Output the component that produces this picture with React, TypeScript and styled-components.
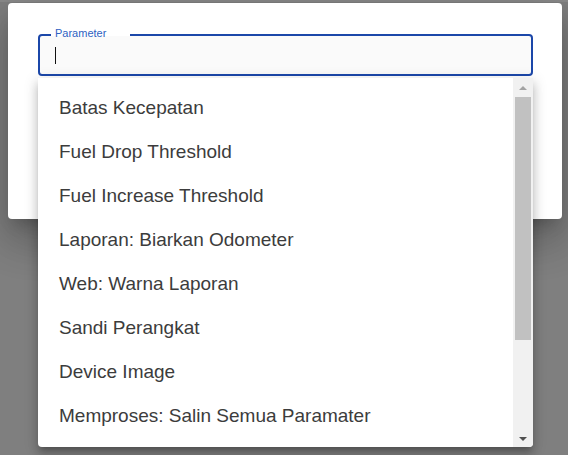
import styled, { createGlobalStyle } from "styled-components";

/*
 * Parameter picker: a dialog with an outlined, focused text field and its
 * open autocomplete list hanging below it over the dialog.
 */

const options = [
  "Batas Kecepatan",
  "Fuel Drop Threshold",
  "Fuel Increase Threshold",
  "Laporan: Biarkan Odometer",
  "Web: Warna Laporan",
  "Sandi Perangkat",
  "Device Image",
  "Memproses: Salin Semua Paramater",
];

const GlobalStyle = createGlobalStyle`
  html, body {
    margin: 0;
    padding: 0;
    background: #7f7f7f;
    font-family: "Liberation Sans", Arial, sans-serif;
  }
`;

export default function App() {
  return (
    <>
      <GlobalStyle />
      <Backdrop>
        <Dialog>
          <FieldWrap>
            <Field>
              <Notch />
              <Label>Parameter</Label>
              <Caret />
            </Field>
            <Menu>
              <OptionList>
                {options.map((o) => (
                  <Option key={o}>{o}</Option>
                ))}
              </OptionList>
              <Scrollbar>
                <ScrollButton>
                  <Arrow $dir="up" />
                </ScrollButton>
                <Track>
                  <Thumb />
                </Track>
                <ScrollButton>
                  <Arrow $dir="down" />
                </ScrollButton>
              </Scrollbar>
            </Menu>
          </FieldWrap>
        </Dialog>
      </Backdrop>
    </>
  );
}

const Backdrop = styled.div`
  height: 455px;
  box-sizing: border-box;
  padding: 3px 0 0 8px;
  overflow: hidden;
  background: linear-gradient(#8a8a8a 0, #8a8a8a 2px, #7f7f7f 2px);
`;

const Dialog = styled.div`
  width: 554px;
  height: 216px;
  box-sizing: border-box;
  padding: 31px 29px 0 30px;
  background: #fff;
  border-radius: 4px;
  box-shadow: 0 11px 15px -7px rgba(0, 0, 0, 0.2),
    0 24px 38px 3px rgba(0, 0, 0, 0.14), 0 9px 46px 8px rgba(0, 0, 0, 0.12);
`;

const FieldWrap = styled.div`
  position: relative;
  width: 495px;
`;

const Field = styled.div`
  position: relative;
  height: 42px;
  box-sizing: border-box;
  border: 2px solid #1b47a9;
  border-radius: 4px;
  background: #fafafa;
  display: flex;
  align-items: center;
  padding-left: 15px;
`;

const Notch = styled.span`
  position: absolute;
  top: -2px;
  left: 11px;
  width: 79px;
  height: 7px;
  background: linear-gradient(#fff 0, #fff 2px, #fafafa 2px);
`;

const Label = styled.span`
  position: absolute;
  top: -9px;
  left: 15px;
  font-size: 11px;
  line-height: 13px;
  color: #2e5fc2;
`;

const Caret = styled.span`
  width: 1px;
  height: 17px;
  background: #111;
`;

const Menu = styled.div`
  position: absolute;
  top: 44px;
  left: 0;
  width: 495px;
  height: 369px;
  display: flex;
  background: #fff;
  border-radius: 0 0 4px 4px;
  overflow: hidden;
  box-shadow: 0 5px 5px -3px rgba(0, 0, 0, 0.2),
    0 8px 10px 1px rgba(0, 0, 0, 0.14), 0 3px 14px 2px rgba(0, 0, 0, 0.12);
`;

const OptionList = styled.ul`
  flex: 1;
  margin: 0;
  padding: 8px 0 0;
  list-style: none;
  overflow: hidden;
`;

const Option = styled.li`
  height: 44px;
  display: flex;
  align-items: center;
  padding-left: 21px;
  font-size: 19px;
  color: #3c3c3c;
  white-space: nowrap;
`;

const Scrollbar = styled.div`
  width: 20px;
  display: flex;
  flex-direction: column;
  background: #f1f1f1;
`;

const ScrollButton = styled.div`
  height: 19px;
  display: flex;
  align-items: center;
  justify-content: center;
`;

const Arrow = styled.span<{ $dir: "up" | "down" }>`
  width: 0;
  height: 0;
  border-left: 4.5px solid transparent;
  border-right: 4.5px solid transparent;
  ${(p) =>
    p.$dir === "up"
      ? "border-bottom: 4px solid #a3a3a3; margin-top: 1px;"
      : "border-top: 4px solid #505050; margin-top: 2px;"}
`;

const Track = styled.div`
  flex: 1;
  padding: 0 2px;
`;

const Thumb = styled.div`
  height: 243px;
  background: #c1c1c1;
`;
